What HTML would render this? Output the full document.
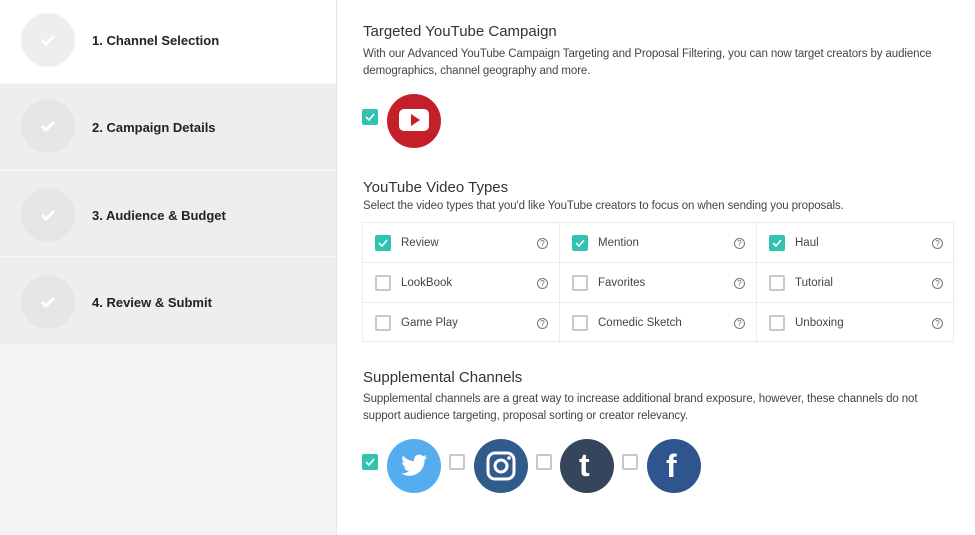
<!DOCTYPE html>
<html><head><meta charset="utf-8"><style>
*{box-sizing:border-box;margin:0;padding:0}
body{width:975px;height:535px;overflow:hidden;font-family:"Liberation Sans",sans-serif;background:#fff;position:relative;color:#333}
.side{position:absolute;left:0;top:0;width:337px;height:535px;background:#f4f4f4;border-right:1px solid #e6e6e6}
.step{position:absolute;left:0;width:336px;height:86px;background:#eee;border-bottom:1px solid #f7f7f7}
.step.a{background:#fff}
.circ{position:absolute;left:21px;top:13px;width:54px;height:54px;border-radius:50%;background:#e6e6e6}
.step.a .circ{background:#eee}
.circ svg{position:absolute;left:18px;top:18px}
.step span{position:absolute;left:92px;top:33px;font-size:13px;font-weight:bold;color:#222}
h2{position:absolute;font-size:15px;font-weight:normal;color:#333}
p{position:absolute;font-size:11.5px;line-height:17px;color:#444}
.cb{position:absolute;width:16px;height:16px;border:2px solid #c8c8c8;border-radius:2px;background:#fff}
.cb.on{background:#32c2b0;border:none}
.cb.on svg{position:absolute;left:3px;top:4px}
.grid{position:absolute;left:362px;top:222px;width:592px;height:120px;border:1px solid #ececec}
.cell{position:absolute;width:197px;height:40px;border-right:1px solid #ececec;border-bottom:1px solid #ececec}
.cell .cb{left:12px;top:12px}
.cell .l{position:absolute;left:38px;top:14px;font-size:11.5px;color:#444}
.cell .q{position:absolute;right:11px;top:15px;width:11px;height:11px;border:1px solid #777;border-radius:50%;font-size:8px;line-height:9px;text-align:center;color:#666}
.ic{position:absolute;width:54px;height:54px;border-radius:50%}
</style></head><body>
<div class="side">
<div class="step a" style="top:0;height:84px"><div class="circ"><svg width="18" height="18" viewBox="0 0 18 18"><path d="M3 9l4 4 8-8" stroke="#fff" stroke-width="3" fill="none"/></svg></div><span>1. Channel Selection</span></div>
<div class="step" style="top:84px"><div class="circ" style="top:15px"><svg width="18" height="18" viewBox="0 0 18 18"><path d="M3 9l4 4 8-8" stroke="#fff" stroke-width="3" fill="none"/></svg></div><span style="top:36px">2. Campaign Details</span></div>
<div class="step" style="top:171px"><div class="circ" style="top:17px"><svg width="18" height="18" viewBox="0 0 18 18"><path d="M3 9l4 4 8-8" stroke="#fff" stroke-width="3" fill="none"/></svg></div><span style="top:37px">3. Audience &amp; Budget</span></div>
<div class="step" style="top:258px;height:87px"><div class="circ" style="top:17px"><svg width="18" height="18" viewBox="0 0 18 18"><path d="M3 9l4 4 8-8" stroke="#fff" stroke-width="3" fill="none"/></svg></div><span style="top:37px">4. Review &amp; Submit</span></div>
</div>

<h2 style="left:363px;top:23px">Targeted YouTube Campaign</h2>
<p style="left:363px;top:46px;width:600px;letter-spacing:-0.1px">With our Advanced YouTube Campaign Targeting and Proposal Filtering, you can now target creators by audience demographics, channel geography and more.</p>
<div class="cb on" style="left:362px;top:109px"><svg width="10" height="8" viewBox="0 0 10 8"><path d="M1 4l3 3 5-6" stroke="#fff" stroke-width="1.6" fill="none"/></svg></div>
<div class="ic" style="left:387px;top:94px;background:#c4202a"><svg width="54" height="54"><rect x="12" y="15" width="30" height="22" rx="5" fill="#fff"/><path d="M24 20l9 6-9 6z" fill="#c4202a"/></svg></div>

<h2 style="left:363px;top:179px">YouTube Video Types</h2>
<p style="left:363px;top:198px;letter-spacing:-0.1px">Select the video types that you'd like YouTube creators to focus on when sending you proposals.</p>
<div class="grid">
<div class="cell" style="left:0;top:0"><div class="cb on"><svg width="10" height="8" viewBox="0 0 10 8"><path d="M1 4l3 3 5-6" stroke="#fff" stroke-width="1.6" fill="none"/></svg></div><span class="l">Review</span><span class="q">?</span></div>
<div class="cell" style="left:197px;top:0"><div class="cb on"><svg width="10" height="8" viewBox="0 0 10 8"><path d="M1 4l3 3 5-6" stroke="#fff" stroke-width="1.6" fill="none"/></svg></div><span class="l">Mention</span><span class="q">?</span></div>
<div class="cell" style="left:394px;top:0;border-right:none"><div class="cb on"><svg width="10" height="8" viewBox="0 0 10 8"><path d="M1 4l3 3 5-6" stroke="#fff" stroke-width="1.6" fill="none"/></svg></div><span class="l">Haul</span><span class="q">?</span></div>
<div class="cell" style="left:0;top:40px"><div class="cb"></div><span class="l">LookBook</span><span class="q">?</span></div>
<div class="cell" style="left:197px;top:40px"><div class="cb"></div><span class="l">Favorites</span><span class="q">?</span></div>
<div class="cell" style="left:394px;top:40px;border-right:none"><div class="cb"></div><span class="l">Tutorial</span><span class="q">?</span></div>
<div class="cell" style="left:0;top:80px;border-bottom:none"><div class="cb"></div><span class="l">Game Play</span><span class="q">?</span></div>
<div class="cell" style="left:197px;top:80px;border-bottom:none"><div class="cb"></div><span class="l">Comedic Sketch</span><span class="q">?</span></div>
<div class="cell" style="left:394px;top:80px;border:none"><div class="cb"></div><span class="l">Unboxing</span><span class="q">?</span></div>
</div>

<h2 style="left:363px;top:369px">Supplemental Channels</h2>
<p style="left:363px;top:391px;width:585px;letter-spacing:-0.1px">Supplemental channels are a great way to increase additional brand exposure, however, these channels do not support audience targeting, proposal sorting or creator relevancy.</p>
<div class="cb on" style="left:362px;top:454px"><svg width="10" height="8" viewBox="0 0 10 8"><path d="M1 4l3 3 5-6" stroke="#fff" stroke-width="1.6" fill="none"/></svg></div>
<div class="ic" style="left:387px;top:439px;background:#55acee"><svg width="54" height="54" viewBox="0 0 54 54"><path d="M40 18c-1 .5-2 .8-3 .9 1-.7 2-1.7 2.3-2.9-1 .6-2.1 1-3.3 1.3a5.3 5.3 0 0 0-9 4.8c-4.4-.2-8.3-2.3-11-5.5-1.5 2.5-.7 5.6 1.6 7.1-.9 0-1.7-.3-2.4-.7 0 2.6 1.8 4.8 4.3 5.3-.8.2-1.6.2-2.4.1.7 2.1 2.7 3.6 5 3.7-2.3 1.8-5.2 2.6-8 2.3 2.4 1.5 5.2 2.4 8.2 2.4 10 0 15.5-8.3 15.2-15.8 1.1-.8 2-1.7 2.7-2.8z" fill="#fff"/></svg></div>
<div class="cb" style="left:449px;top:454px"></div>
<div class="ic" style="left:474px;top:439px;background:#305b8a"><svg width="54" height="54"><rect x="14" y="14" width="26" height="26" rx="7" fill="none" stroke="#fff" stroke-width="3"/><circle cx="27" cy="27" r="6" fill="none" stroke="#fff" stroke-width="3"/><circle cx="35" cy="19" r="1.8" fill="#fff"/></svg></div>
<div class="cb" style="left:536px;top:454px"></div>
<div class="ic" style="left:560px;top:439px;background:#35465c"><span style="position:absolute;left:19px;top:8px;color:#fff;font-size:32px;font-weight:bold">t</span></div>
<div class="cb" style="left:622px;top:454px"></div>
<div class="ic" style="left:647px;top:439px;background:#30548d"><span style="position:absolute;left:19px;top:9px;color:#fff;font-size:32px;font-weight:bold">f</span></div>
</body></html>
